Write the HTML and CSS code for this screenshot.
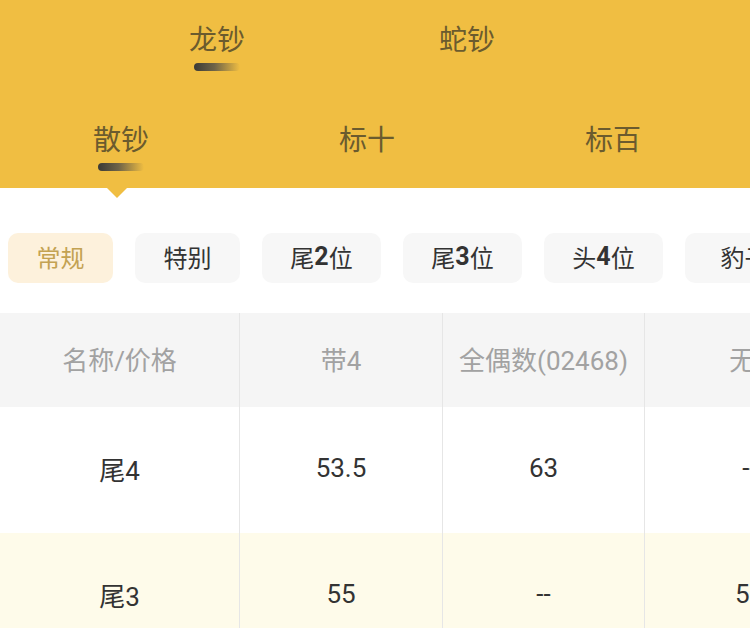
FILE: index.html
```html
<!DOCTYPE html>
<html lang="zh">
<head>
<meta charset="utf-8">
<link rel="stylesheet" href="styles.css">
</head>
<body>
<div class="top">
  <div class="tabs tabs-1">
    <div class="tab active"><span class="label">龙钞</span><span class="bar"></span></div>
    <div class="tab"><span class="label">蛇钞</span><span class="bar none"></span></div>
  </div>
  <div class="tabs tabs-2">
    <div class="tab active"><span class="label">散钞</span><span class="bar"></span><span class="pointer"></span></div>
    <div class="tab"><span class="label">标十</span><span class="bar none"></span></div>
    <div class="tab"><span class="label">标百</span><span class="bar none"></span></div>
  </div>
</div>
<div class="chips">
  <div class="chip on w1">常规</div>
  <div class="chip w1">特别</div>
  <div class="chip w2">尾<b>2</b>位</div>
  <div class="chip w2">尾<b>3</b>位</div>
  <div class="chip w2">头<b>4</b>位</div>
  <div class="chip w2">豹子</div>
</div>
<div class="table">
  <div class="row head">
    <div class="cell c1">名称/价格</div>
    <div class="cell c2">带4</div>
    <div class="cell c3">全偶数(02468)</div>
    <div class="cell c4">无4</div>
  </div>
  <div class="row">
    <div class="cell c1">尾4</div>
    <div class="cell c2">53.5</div>
    <div class="cell c3">63</div>
    <div class="cell c4">--</div>
  </div>
  <div class="row alt">
    <div class="cell c1">尾3</div>
    <div class="cell c2">55</div>
    <div class="cell c3">--</div>
    <div class="cell c4">57</div>
  </div>
</div>
</body>
</html>
```
FILE: styles.css
```css
* { box-sizing: border-box; }
html, body { margin: 0; padding: 0; }
body {
  width: 750px;
  height: 628px;
  overflow: hidden;
  background: #ffffff;
  font-family: Roboto, "Noto Sans CJK SC", sans-serif;
  color: #333333;
}
.top {
  background: #f0be42;
  height: 188px;
  padding-top: 20px;
}
.tabs { display: flex; }
.tabs-1 { padding-left: 92px; height: 100px; }
.tabs-2 { margin-left: -2px; }
.tab {
  position: relative;
  width: 250px;
  display: flex;
  flex-direction: column;
  align-items: center;
}
.tabs-2 .tab { width: 246px; }
.label {
  font-size: 28px;
  line-height: 36px;
  color: #6b5b2e;
  font-family: "Noto Sans CJK SC", sans-serif;
}
.bar {
  margin-top: 7px;
  width: 46px;
  height: 8px;
  border-radius: 4px;
  background: linear-gradient(90deg, #3b3a36 0%, #6f6448 45%, rgba(240,190,66,0) 100%);
}
.bar.none { background: transparent; }
.pointer {
  position: absolute;
  left: 50%;
  top: 68px;
  margin-left: -14px;
  width: 0;
  height: 0;
  border-left: 10px solid transparent;
  border-right: 10px solid transparent;
  border-top: 10px solid #f0be42;
}
.chips {
  display: flex;
  gap: 22px;
  padding: 0 8px;
  margin-top: 45px;
  white-space: nowrap;
  overflow: hidden;
}
.chip {
  flex: none;
  height: 50px;
  border-radius: 10px;
  background: #f7f7f7;
  display: flex;
  align-items: center;
  justify-content: center;
  font-size: 24px;
  color: #333333;
  font-family: "Noto Sans CJK SC", sans-serif;
  padding-bottom: 3px;
}
.chip b { font-family: Roboto, sans-serif; font-weight: 700; font-size: 25px; }
.chip.w1 { width: 105px; }
.chip.w2 { width: 119px; }
.chip.on { background: #fdf1dc; color: #c3a252; }
.table {
  margin-top: 30px;
  width: 900px;
}
.row { display: flex; height: 126px; }
.row.head { height: 94px; background: #f5f5f5; }
.row.head .cell { color: #a2a2a2; }
.row.alt { background: #fefbea; }
.cell {
  flex: none;
  display: flex;
  align-items: center;
  justify-content: center;
  font-size: 26px;
  color: #333333;
  border-right: 1px solid #e6e6e6;
  padding-bottom: 4px;
}
.c1 { width: 240px; }
.c2 { width: 203px; }
.c3 { width: 202px; }
.c4 { width: 210px; }
```
